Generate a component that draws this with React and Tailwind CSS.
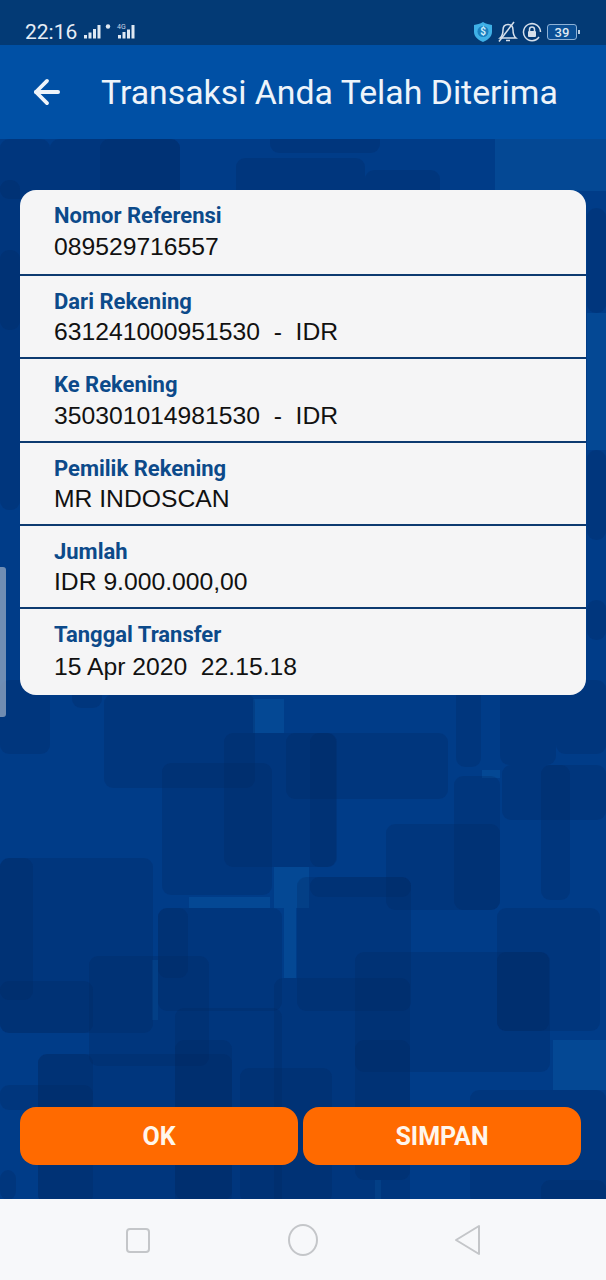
import React from 'react';
import { ArrowLeft } from 'lucide-react';

// x, y, w, h of the darker tiles in the wallpaper
const darkTiles = [
  [0, 139, 50, 60], [50, 139, 130, 60], [100, 139, 80, 60], [236, 158, 129, 60], [270, 130, 110, 23], [365, 170, 75, 40],
  [0, 180, 20, 150], [0, 250, 20, 260], [587, 208, 19, 105], [587, 450, 19, 90], [587, 600, 19, 40],
  [104, 694, 151, 94], [162, 763, 110, 132], [224, 733, 112, 134], [286, 733, 162, 66], [310, 733, 27, 134],
  [386, 824, 114, 86], [454, 776, 46, 134], [502, 765, 104, 55], [541, 765, 29, 135],
  [456, 680, 25, 87], [500, 680, 56, 85], [556, 680, 50, 74], [0, 680, 50, 74], [72, 680, 30, 28],
  [0, 858, 153, 175], [0, 858, 33, 142], [158, 908, 124, 103], [158, 908, 30, 70], [297, 877, 114, 134],
  [310, 877, 101, 20], [355, 952, 195, 120], [497, 908, 103, 123], [497, 952, 52, 79],
  [89, 956, 120, 110], [0, 981, 93, 52], [274, 978, 136, 240], [175, 1008, 107, 200],
  [38, 1054, 194, 150], [38, 1054, 55, 150], [175, 1040, 57, 160], [240, 1068, 92, 135],
  [355, 1040, 55, 140], [470, 1090, 136, 115], [541, 1180, 65, 25], [0, 1085, 93, 25], [0, 1170, 16, 30],
];

// the lighter gaps where the tiles leave the base colour showing
const lightTiles = [
  [253, 699, 31, 34], [482, 770, 18, 8], [274, 867, 35, 41], [189, 897, 81, 11], [553, 1040, 53, 50],
  [375, 1180, 6, 20], [495, 139, 111, 52], [587, 313, 19, 137], [152, 960, 6, 60], [284, 908, 12, 70],
];

const rows = [
  { label: 'Nomor Referensi', value: '089529716557', gap: 'mt-[5px]', height: 'h-[86px]', line: true },
  { label: 'Dari Rekening', value: '631241000951530  -  IDR', gap: 'mt-[4px]', height: 'h-[83.300px]', line: true },
  { label: 'Ke Rekening', value: '350301014981530  -  IDR', gap: 'mt-[5px]', height: 'h-[83.300px]', line: true },
  { label: 'Pemilik Rekening', value: 'MR INDOSCAN', gap: 'mt-[4px]', height: 'h-[83.300px]', line: true },
  { label: 'Jumlah', value: 'IDR 9.000.000,00', gap: 'mt-[4px]', height: 'h-[83.300px]', line: true },
  { label: 'Tanggal Transfer', value: '15 Apr 2020  22.15.18', gap: 'mt-[6px]', height: 'h-[86px]', line: false },
];

function Wallpaper() {
  return (
    <svg className="absolute inset-0" width="606" height="1280" viewBox="0 0 606 1280">
      {lightTiles.map(([x, y, w, h], i) => (
        <rect key={i} x={x} y={y} width={w} height={h} fill="#0a5aa8" opacity="0.4" />
      ))}
      {darkTiles.map(([x, y, w, h], i) => (
        <rect key={i} x={x} y={y} width={w} height={h} rx="9" fill="#00245e" opacity="0.24" />
      ))}
    </svg>
  );
}

function SignalIcons() {
  return (
    <svg width="52" height="18" viewBox="0 0 52 18" fill="#dfe8f2">
      <rect x="0" y="12" width="3" height="3.500" />
      <rect x="4.500" y="9.500" width="3" height="6" />
      <rect x="9" y="6" width="3" height="9.500" />
      <rect x="13.500" y="2" width="3" height="13.500" />
      <circle cx="24" cy="3.500" r="2.200" />
      <text x="33" y="6" fontSize="7" fontFamily="Roboto, sans-serif" fill="#c7d5e6">4G</text>
      <rect x="34" y="12" width="3" height="3.500" />
      <rect x="38.500" y="9" width="3" height="6.500" />
      <rect x="43" y="6.500" width="3" height="9" />
      <rect x="47.500" y="2" width="3" height="13.500" />
    </svg>
  );
}

function ShieldIcon() {
  return (
    <svg width="20" height="22" viewBox="0 0 20 22">
      <path d="M10 1 C13 3 16 3.500 19 4 V11 C19 16 14 19.500 10 21 C6 19.500 1 16 1 11 V4 C4 3.500 7 3 10 1 Z" fill="#3fb0e6" />
      <circle cx="10" cy="10.500" r="5.500" fill="#1a7fc0" />
      <text x="10" y="14" textAnchor="middle" fontSize="10" fontWeight="700" fontFamily="Roboto, sans-serif" fill="#cfeefb">$</text>
    </svg>
  );
}

function BellOffIcon() {
  return (
    <svg width="20" height="22" viewBox="0 0 20 22" fill="none" stroke="#d5dfeb" strokeWidth="1.500">
      <path d="M2 17 C4.500 15 5 12 5 9 C5 5.500 7 3.500 10 3.500 C13 3.500 15 5.500 15 9 C15 12 15.500 15 18 17 Z" />
      <path d="M8 19.500 H12" />
      <path d="M1 20.500 L16 1" />
    </svg>
  );
}

function LockIcon() {
  return (
    <svg width="20" height="20" viewBox="0 0 20 20" fill="none" stroke="#d5dfeb" strokeWidth="1.500">
      <path d="M17 15 A8.500 8.500 0 1 1 18.500 10" />
      <rect x="6" y="9" width="8" height="6" rx="1" fill="#d5dfeb" stroke="none" />
      <path d="M7.500 9 V7.500 A2.500 2.500 0 0 1 12.500 7.500 V9" />
    </svg>
  );
}

function StatusBar() {
  return (
    <div className="h-[45px] bg-[#033a75] flex items-center justify-between pl-[25px] pr-[26px] pt-[19px]">
      <div className="flex items-center gap-[7px]">
        <span className="text-[21px] leading-none text-[#e6edf5] font-['Roboto',sans-serif]">22:16</span>
        <SignalIcons />
      </div>
      <div className="flex items-center gap-[5px]">
        <ShieldIcon />
        <div className="-mr-[1px]">
          <BellOffIcon />
        </div>
        <LockIcon />
        <div className="flex items-center gap-[1px]">
          <div className="w-[30px] h-[16px] rounded-[3px] border border-[#8fb2d6] bg-[#0b4f95] flex items-center justify-center text-[13px] leading-none font-medium text-[#dfe8f2] font-['Roboto',sans-serif]">
            39
          </div>
          <div className="w-[2px] h-[4px] bg-[#b9cde2]"></div>
        </div>
      </div>
    </div>
  );
}

function Header() {
  return (
    <div className="h-[94px] bg-[#0050a5] flex items-center pl-[28px]">
      <ArrowLeft size={38} strokeWidth={2.400} className="text-[#eef4fa]" />
      <h1 className="ml-[35px] pt-[2px] text-[33.800px] leading-none font-normal text-[#eef4fa] font-['Roboto',sans-serif]">
        Transaksi Anda Telah Diterima
      </h1>
    </div>
  );
}

function DetailCard() {
  return (
    <div className="mt-[51px] mx-[20px] w-[566px] rounded-[16px] bg-[#f5f5f6] overflow-hidden">
      {rows.map((row) => (
        <div
          key={row.label}
          className={`pl-[34px] pt-[13px] ${row.height} ${row.line ? 'border-b-2 border-[#0d3a70]' : ''}`}
        >
          <div className="text-[22px] leading-[25px] font-bold text-[#0c4a8a] font-['Roboto',sans-serif]">{row.label}</div>
          <div className={`${row.gap} text-[24.700px] leading-[28px] whitespace-pre text-[#111] font-['Liberation_Sans',sans-serif]`}>{row.value}</div>
        </div>
      ))}
    </div>
  );
}

function NavBar() {
  return (
    <div className="h-[81px] bg-[#f7f8fa] flex items-center justify-center">
      <div className="w-[165px] flex justify-center">
        <svg width="26" height="26" viewBox="0 0 26 26" fill="none" stroke="#c4c6c9" strokeWidth="2">
          <rect x="2" y="2" width="22" height="23" rx="3" />
        </svg>
      </div>
      <div className="w-[165px] flex justify-center">
        <svg width="32" height="32" viewBox="0 0 32 32" fill="none" stroke="#c4c6c9" strokeWidth="2">
          <ellipse cx="16" cy="16" rx="14" ry="15" />
        </svg>
      </div>
      <div className="w-[165px] flex justify-center">
        <svg width="28" height="32" viewBox="0 0 28 32" fill="none" stroke="#c4c6c9" strokeWidth="2" strokeLinejoin="round">
          <path d="M25 2 V30 L2 16 Z" />
        </svg>
      </div>
    </div>
  );
}

export default function App() {
  return (
    <div className="relative w-[606px] h-[1280px] overflow-hidden bg-[#003c88] flex flex-col">
      <Wallpaper />
      <div className="relative flex flex-col h-full">
        <StatusBar />
        <Header />
        <DetailCard />
        {/* scroll handle pinned to the left edge */}
        <div className="absolute left-0 top-[567px] w-[6px] h-[150px] rounded-r-[3px] bg-[#9fb0c8]/70"></div>
        <div className="flex-1 flex items-end pb-[34px] pl-[20px] gap-[5px]">
          <button className="w-[278px] h-[58px] pt-[1px] rounded-[16px] bg-[#ff6a00] text-[25px] font-bold text-[#fff6ec] font-['Roboto',sans-serif]">OK</button>
          <button className="w-[278px] h-[58px] pt-[1px] rounded-[16px] bg-[#ff6a00] text-[25px] font-bold text-[#fff6ec] font-['Roboto',sans-serif]">SIMPAN</button>
        </div>
        <NavBar />
      </div>
    </div>
  );
}
